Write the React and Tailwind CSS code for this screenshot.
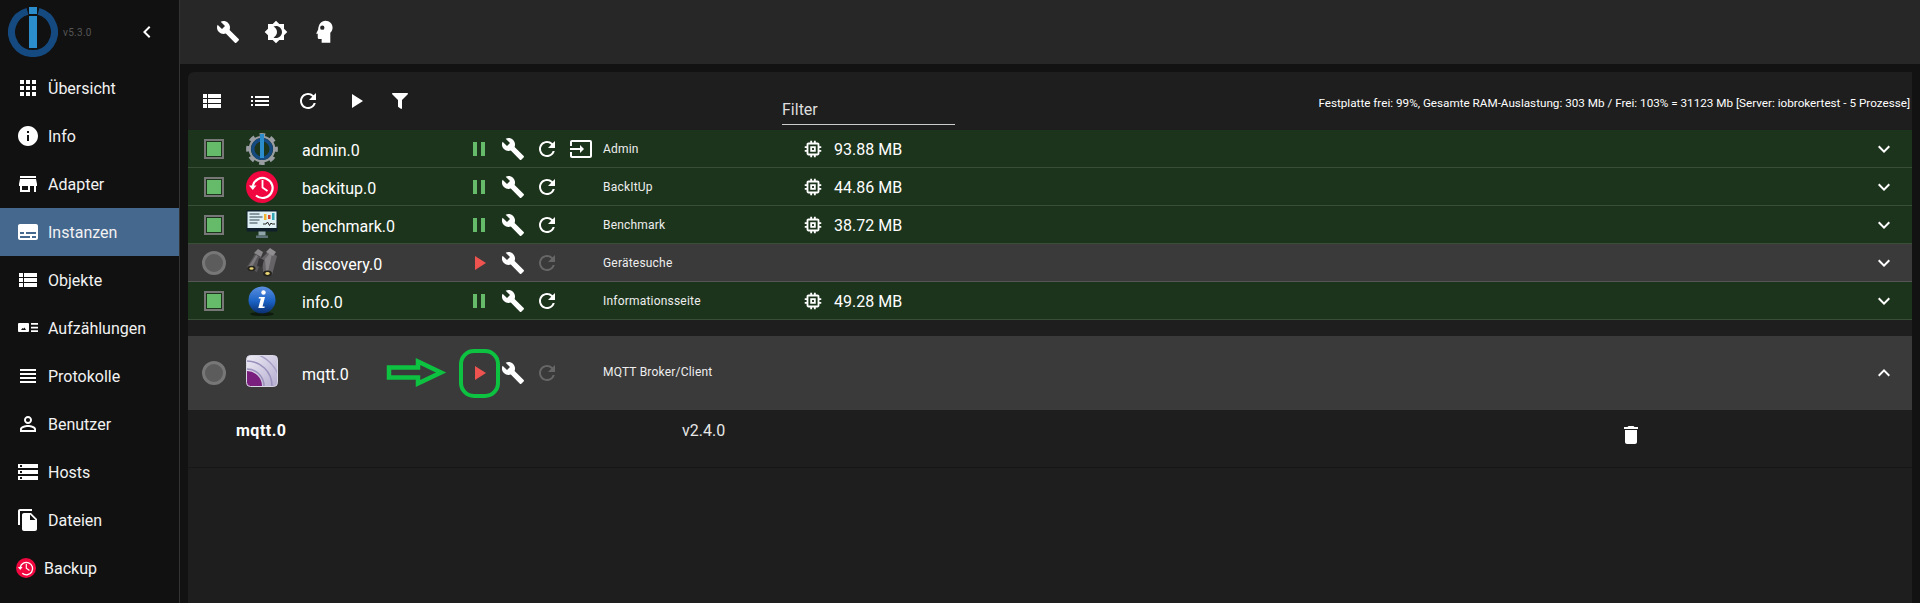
import React from 'react';
import {
  MdApps, MdInfo, MdStore, MdSubtitles, MdViewList, MdViewHeadline, MdPersonOutline, MdStorage,
  MdFileCopy, MdBuild, MdBrightness4, MdRefresh, MdPlayArrow, MdPause, MdInput, MdMemory,
  MdExpandMore, MdExpandLess, MdChevronLeft, MdList, MdDelete,
} from 'react-icons/md';
import { FaFilter } from 'react-icons/fa';

const IobLogo = () => (
  <svg width="50" height="50" viewBox="0 0 50 50" className="shrink-0">
    <path d="M19.500 4.300A21.500 21.500 0 1 0 30.500 4.300" fill="none" stroke="#154a80" strokeWidth="7" />
    <rect x="21" y="0" width="8" height="7" fill="#2b8dcb" />
    <rect x="21" y="9" width="8" height="32" fill="#2b8dcb" />
  </svg>
);

const ClockIcon = ({ size }) => (
  <svg width={size} height={size} viewBox="0 0 32 32">
    <circle cx="16" cy="16" r="16" fill="#f0073f" />
    <path d="M6.800 15A10 10 0 1 1 10 24.500" fill="none" stroke="#fff" strokeWidth="2.200" />
    <path d="M3 14.500h7.500l-3.700 4.500z" fill="#fff" />
    <path d="M16.500 9v7.500l5 3.500" fill="none" stroke="#fff" strokeWidth="1.800" />
  </svg>
);

const AdminIcon = () => (
  <svg width="32" height="32" viewBox="0 0 32 32">
    <circle cx="16" cy="16" r="14.200" fill="none" stroke="#9a9ea3" strokeWidth="3.400" strokeDasharray="5.600 5.550" strokeDashoffset="2.800" />
    <circle cx="16" cy="16" r="12.200" fill="none" stroke="#9a9ea3" strokeWidth="2.200" />
    <circle cx="16" cy="16" r="9.200" fill="#1c341c" stroke="#154a80" strokeWidth="3.400" />
    <rect x="14" y="1" width="4" height="24" fill="#2b8dcb" />
  </svg>
);

const BenchmarkIcon = () => (
  <svg width="32" height="32" viewBox="0 0 32 32">
    <rect x="0.500" y="1" width="31" height="21.500" rx="1.500" fill="#10202a" />
    <rect x="1.500" y="2.500" width="29" height="16.500" fill="#dff1f4" />
    <path d="M3.500 5h10M3.500 8h13M3.500 11h10M3.500 14h8" stroke="#33454f" strokeWidth="1.200" />
    <rect x="18" y="5" width="2.500" height="6" fill="#f2b632" />
    <rect x="22" y="6" width="2.500" height="4" fill="#d8452e" />
    <rect x="26" y="4" width="2.500" height="7" fill="#35a6b5" />
    <path d="M17 15h3l1.500-2 2 3.500 1.500-2.500 1 1h3" fill="none" stroke="#222" strokeWidth="1" />
    <rect x="12.500" y="22.500" width="7" height="4" fill="#8fa5aa" />
    <rect x="10" y="26.500" width="12" height="2.500" fill="#5d7378" />
  </svg>
);

const BinocularsIcon = () => (
  <svg width="32" height="32" viewBox="0 0 32 32">
    <path d="M1 20L9 7l7 4-5 14z" fill="#5a575a" />
    <path d="M3 19L10 8l2 1-6 11z" fill="#7d7a7d" />
    <path d="M8 6l4-4 5 3-2 5z" fill="#8a878a" />
    <path d="M16 11l7-7 8 5-5 19-9-3z" fill="#666366" />
    <path d="M19 12l5-6 2 1-4 18-2-1z" fill="#858285" />
    <path d="M20 5l4-4 6 4-3 4z" fill="#918e91" />
    <path d="M13 11l5 2-2 7-5-1z" fill="#333133" />
    <ellipse cx="5.500" cy="21.500" rx="4" ry="2.800" fill="#26241f" />
    <ellipse cx="5.500" cy="21.500" rx="2" ry="1.300" fill="#e9d472" />
    <ellipse cx="21.500" cy="26.500" rx="4.500" ry="3" fill="#26241f" />
    <ellipse cx="21.500" cy="26.500" rx="2.200" ry="1.400" fill="#e9d472" />
  </svg>
);

const InfoIcon = () => (
  <svg width="32" height="32" viewBox="0 0 32 32">
    <defs>
      <linearGradient id="infoBall" x1="0" y1="0" x2="0" y2="1">
        <stop offset="0" stopColor="#5b8fe0" />
        <stop offset="0.550" stopColor="#1a62c4" />
        <stop offset="1" stopColor="#0b2e6e" />
      </linearGradient>
    </defs>
    <ellipse cx="16" cy="29" rx="12" ry="2" fill="#0e1a0e" />
    <circle cx="16" cy="15" r="13.500" fill="url(#infoBall)" />
    <circle cx="17.500" cy="7.500" r="2.200" fill="#fff" />
    <path d="M13 12h6l-2.500 9.500h2.300l-.5 1.500h-6l2.500-9.400h-2.200z" fill="#fff" />
  </svg>
);

const MqttIcon = () => (
  <svg width="32" height="32" viewBox="0 0 32 32">
    <defs>
      <linearGradient id="mqttBg" x1="0" y1="0" x2="1" y2="1">
        <stop offset="0" stopColor="#f0eef6" />
        <stop offset="1" stopColor="#b3abcf" />
      </linearGradient>
      <clipPath id="mqttClip">
        <rect x="0.500" y="0.500" width="31" height="31" rx="4" />
      </clipPath>
    </defs>
    <g clipPath="url(#mqttClip)">
      <rect width="32" height="32" fill="url(#mqttBg)" />
      <circle cx="1" cy="31" r="17" fill="none" stroke="#9b91bd" strokeWidth="1.500" />
      <circle cx="1" cy="31" r="25" fill="none" stroke="#9b91bd" strokeWidth="1.500" />
      <circle cx="1" cy="31" r="33" fill="none" stroke="#a9a0c8" strokeWidth="1.500" />
      <circle cx="1" cy="31" r="15" fill="#7b1f7f" />
    </g>
    <rect x="0.500" y="0.500" width="31" height="31" rx="4" fill="none" stroke="#d9d6e6" />
  </svg>
);

const HeadIcon = () => (
  <svg width="26" height="26" viewBox="0 0 24 24" fill="#fff">
    <path fillRule="evenodd" d="M12.500 1.500c3.700 0 6.500 2.800 6.500 6.400 0 2-.8 3.700-2.100 4.900v9.200h-8v-3.500H6.800c-.9 0-1.500-.7-1.500-1.500v-3.300H3.800l1.900-3.900C5.900 5 8.500 1.500 12.500 1.500zM9.500 6a2 2 0 1 0 0 4 2 2 0 0 0 0-4z" />
  </svg>
);

const EnumIcon = () => (
  <svg width="24" height="24" viewBox="0 0 24 24" fill="#fff">
    <path fillRule="evenodd" d="M3 7h9a1 1 0 0 1 1 1v7a1 1 0 0 1-1 1H3a1 1 0 0 1-1-1V8a1 1 0 0 1 1-1zm2 7h5l-1.500-2.500-1.200 1.300-.8-.8z" />
    <path d="M15 7h7v1.700h-7zM15 10.700h7v1.700h-7zM15 14.300h7V16h-7z" />
  </svg>
);

const navItems = [
  { label: 'Übersicht', icon: <MdApps size={24} /> },
  { label: 'Info', icon: <MdInfo size={24} /> },
  { label: 'Adapter', icon: <MdStore size={24} /> },
  { label: 'Instanzen', icon: <MdSubtitles size={24} />, active: true },
  { label: 'Objekte', icon: <MdViewList size={24} /> },
  { label: 'Aufzählungen', icon: <EnumIcon /> },
  { label: 'Protokolle', icon: <MdViewHeadline size={24} /> },
  { label: 'Benutzer', icon: <MdPersonOutline size={24} /> },
  { label: 'Hosts', icon: <MdStorage size={24} /> },
  { label: 'Dateien', icon: <MdFileCopy size={24} /> },
];

const instances = [
  { name: 'admin.0', icon: <AdminIcon />, desc: 'Admin', ram: '93.88 MB', on: true, link: true },
  { name: 'backitup.0', icon: <ClockIcon size={32} />, desc: 'BackItUp', ram: '44.86 MB', on: true },
  { name: 'benchmark.0', icon: <BenchmarkIcon />, desc: 'Benchmark', ram: '38.72 MB', on: true },
  { name: 'discovery.0', icon: <BinocularsIcon />, desc: 'Gerätesuche', on: false },
  { name: 'info.0', icon: <InfoIcon />, desc: 'Informationsseite', ram: '49.28 MB', on: true },
];

const Status = ({ on }) => (
  <div className="w-[52px] shrink-0 flex justify-center">
    {on ? (
      <div className="w-5 h-5 bg-[#66bb6a] border-2 border-[#777] shadow-[inset_0_0_0_1px_#1c341c]" />
    ) : (
      <div className="w-6 h-6 rounded-full bg-[#5c5c5c] border-[3px] border-[#777]" />
    )}
  </div>
);

const Actions = ({ on, link }) => (
  <>
    <div className="w-[34px] shrink-0 flex justify-center">
      {on ? <MdPause size={24} className="text-[#66bb6a]" /> : <MdPlayArrow size={24} className="text-[#ef5350]" />}
    </div>
    <div className="w-[34px] shrink-0 flex justify-center"><MdBuild size={24} className="text-white" /></div>
    <div className="w-[34px] shrink-0 flex justify-center">
      <MdRefresh size={24} className={on ? 'text-white' : 'text-[#666]'} />
    </div>
    <div className="w-[34px] shrink-0 flex justify-center">
      {link && <MdInput size={24} className="text-white" />}
    </div>
  </>
);

const InstanceRow = ({ item }) => (
  <div
    className={`flex items-center h-[38px] border-b ${
      item.on ? 'bg-[#1c341c] border-[#394d39]' : 'bg-[#3a3a3a] border-[#555]'
    }`}
  >
    <Status on={item.on} />
    <div className="w-[62px] shrink-0 pl-1.5">{item.icon}</div>
    <div className="w-[160px] shrink-0 text-base text-white pt-1">{item.name}</div>
    <Actions on={item.on} link={item.link} />
    <div className="w-[204px] shrink-0 pl-[5px] text-xs text-[#eee] tracking-[0.2px]">{item.desc}</div>
    {item.ram && (
      <div className="flex items-center gap-[10px] text-base text-white">
        <MdMemory size={22} />
        <span className="pt-0.5">{item.ram}</span>
      </div>
    )}
    <MdExpandMore size={24} className="ml-auto mr-4 text-white" />
  </div>
);

export default function App() {
  return (
    <div className="flex h-[603px] overflow-hidden bg-[#121212] text-white font-['Roboto',sans-serif]">
      <aside className="w-[180px] shrink-0 bg-[#111111] border-r border-[#333]">
        <div className="flex items-center h-16 pl-2">
          <IobLogo />
          <span className="ml-[5px] text-[10px] text-[#555] tracking-[0.3px]">v5.3.0</span>
          <MdChevronLeft size={24} className="ml-auto mr-5 text-white" />
        </div>
        <nav>
          {navItems.map((item) => (
            <div key={item.label} className={`flex items-center h-12 pl-4 ${item.active ? 'bg-[#45688f]' : ''}`}>
              <span className="w-8 shrink-0">{item.icon}</span>
              <span className="text-base text-[#f2f2f2] pt-0.5">{item.label}</span>
            </div>
          ))}
          <div className="flex items-center h-12 pl-4">
            <span className="w-7 shrink-0"><ClockIcon size={20} /></span>
            <span className="text-base text-[#f2f2f2] pt-0.5">Backup</span>
          </div>
        </nav>
      </aside>

      <main className="flex-1 min-w-0 flex flex-col">
        <header className="flex items-center h-16 shrink-0 bg-[#272727] pl-9 gap-6">
          <MdBuild size={24} />
          <MdBrightness4 size={24} />
          <HeadIcon />
        </header>

        <section className="mt-2 ml-2 mr-2 flex-1 bg-[#1e1e1e] rounded-tl-md relative">
          <div className="flex items-center h-[58px]">
            <div className="flex items-center pl-3">
              <MdViewList size={24} className="mr-6" />
              <MdList size={24} className="mr-6" />
              <MdRefresh size={24} className="mr-6" />
              <MdPlayArrow size={24} className="mr-6" />
              <FaFilter size={16} />
            </div>
            <div className="ml-[374px] w-[173px] border-b border-[#ccc] text-base text-[#ddd] mt-[22px] pb-[5px] leading-[19px]">Filter</div>
            <div className="ml-auto mr-[2px] text-[11.7px] text-white whitespace-nowrap self-start mt-[22px] leading-[18px]">
              Festplatte frei: 99%, Gesamte RAM-Auslastung: 303 Mb / Frei: 103% = 31123 Mb [Server: iobrokertest - 5 Prozesse]
            </div>
          </div>

          {instances.map((item) => (
            <InstanceRow key={item.name} item={item} />
          ))}

          <div className="mt-4 relative flex items-center h-[74px] bg-[#3a3a3a]">
            <Status on={false} />
            <div className="w-[62px] shrink-0 pl-1.5 -mt-1"><MqttIcon /></div>
            <div className="w-[160px] shrink-0 text-base text-white pt-1">mqtt.0</div>
            <Actions on={false} />
            <div className="pl-[5px] text-xs text-[#eee] tracking-[0.2px] pb-0.5">MQTT Broker/Client</div>
            <MdExpandLess size={24} className="ml-auto mr-4 text-white" />

            {/* annotation drawn over the row */}
            <svg width="62" height="32" viewBox="0 0 62 32" className="absolute left-[198px] top-[21px]">
              <path d="M3 10.500h29V4.500L55 15.500 32 26.500v-6H3z" fill="none" stroke="#0dc240" strokeWidth="4.500" />
            </svg>
            <div className="absolute left-[271px] top-[13px] w-[41px] h-[49px] rounded-[15px] border-4 border-[#0dc240]" />
          </div>

          <div className="flex items-start h-[58px] border-b border-[#171717] relative">
            <div className="w-[156px] shrink-0 pl-12 pt-[11px] text-base font-bold leading-5 tracking-[0.5px]">mqtt.0</div>
            <div className="ml-[338px] pt-[11px] text-base text-[#e6e6e6] leading-5">v2.4.0</div>
            <MdDelete size={24} className="absolute left-[1431px] top-[13px]" />
          </div>
        </section>
      </main>
    </div>
  );
}
